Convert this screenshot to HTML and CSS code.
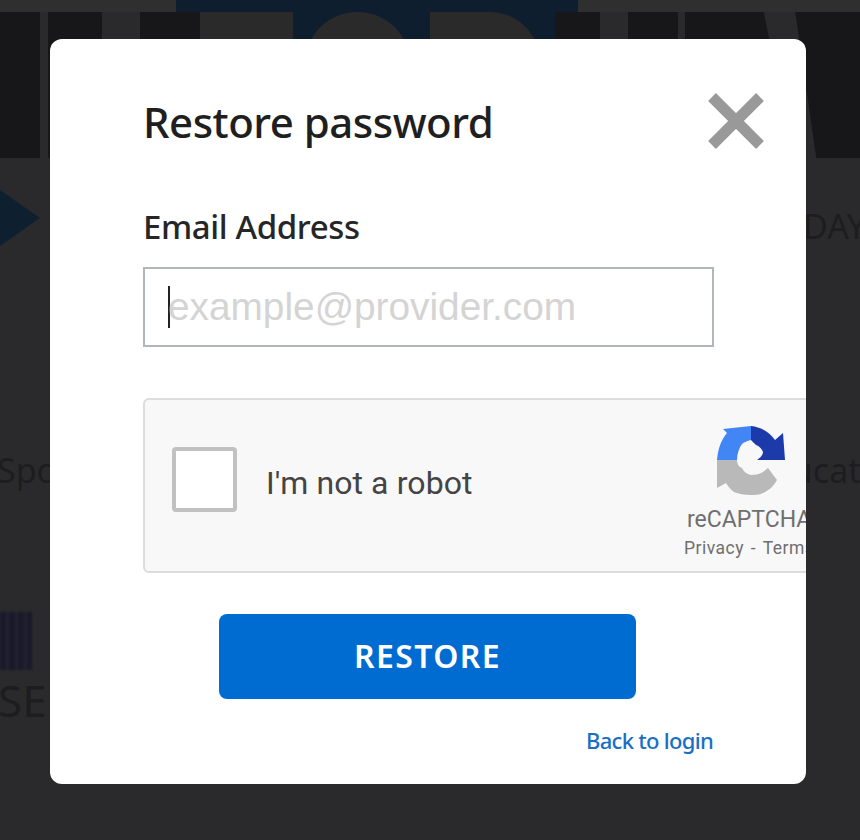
FILE: index.html
```html
<!DOCTYPE html>
<html>
<head>
	<title>Restore password</title>
	<link rel="stylesheet" href="styles.css">
</head>
<body>
	<div class="backdrop">
		<div class="back-strip"></div>
		<div class="back-bar"></div>
		<div class="back-letters">
			<span class="letter letter-a"></span>
			<span class="letter letter-b"></span>
			<span class="letter letter-c"></span>
			<span class="letter letter-d"></span>
			<span class="letter letter-e"></span>
			<span class="letter letter-f"></span>
			<span class="letter letter-g"></span>
			<span class="letter letter-h"></span>
			<span class="letter letter-i"></span>
		</div>
		<div class="back-arrow"></div>
		<div class="back-text back-day">DAY</div>
		<div class="back-text back-sport">Sport</div>
		<div class="back-text back-edu">Education</div>
		<div class="back-logo"></div>
		<div class="back-text back-ser">SER</div>
	</div>
	<div class="modal">
		<div class="modal-head">
			<h1 class="modal-title">Restore password</h1>
			<svg class="close-icon" viewBox="0 0 58 58" width="58" height="58">
				<path d="M5 5 L53 53 M53 5 L5 53" stroke="#999" stroke-width="11" fill="none"/>
			</svg>
		</div>
		<label class="field-label">Email Address</label>
		<div class="email-input">
			<span class="caret"></span>
			<span class="placeholder">example@provider.com</span>
		</div>
		<div class="captcha">
			<div class="captcha-box"></div>
			<div class="captcha-text">I'm not a robot</div>
			<div class="captcha-brand">
				<svg class="captcha-logo" viewBox="0 0 70 70" width="70" height="70">
					<path d="M1 34 C2 23 5 14 11 7 L7 3 L35 0 L35 14 C31 15 28 16 26 18 C23 22 21 28 21 34 Z" fill="#4285f4"/>
					<path d="M35 0 C45 1 53 6 59 14 L67 7 L69 34 L41 34 C44 32 47 29 47 26 C46 23 43 20 40 19 C38 17 36 15 35 14 Z" fill="#1c3aa9"/>
					<path d="M1 34 L21 34 C21 38 23 41 26 42 C28 46 31 48 35 49 C40 49 44 48 47 46 L52 42 L61 54 C57 61 52 65 47 67 C43 69 39 69 35 69 C28 69 23 68 18 66 C15 64 12 60 10 57 L1 62 Z" fill="#b9b9b9"/>
				</svg>
				<div class="captcha-name">reCAPTCHA</div>
				<div class="captcha-links">Privacy - Terms</div>
			</div>
		</div>
		<div class="button-row">
			<div class="restore-button">RESTORE</div>
		</div>
		<div class="back-row">
			<a class="back-link">Back to login</a>
		</div>
	</div>
</body>
</html>
```

FILE: styles.css
```css
html, body {
	margin: 0;
	height: 100%;
}
body {
	position: relative;
	height: 840px;
	overflow: hidden;
	background-color: #2a2a2c;
	font-family: "Noto Sans", "Open Sans", sans-serif;
}
.backdrop {
	position: absolute;
	top: 0;
	left: 0;
	width: 860px;
	height: 840px;
	overflow: hidden;
}
.back-strip {
	height: 12px;
	background-color: #302f30;
}
.back-bar {
	position: absolute;
	top: 0;
	left: 176px;
	width: 402px;
	height: 158px;
	background-color: #0e1e2e;
}
.back-letters {
	position: absolute;
	top: 12px;
	left: 0;
	width: 860px;
	height: 146px;
}
.letter {
	position: absolute;
	top: 0;
	height: 146px;
	background-color: #171719;
}
.letter-a { left: 0; width: 40px; }
.letter-b { left: 48px; width: 54px; }
.letter-c { left: 140px; width: 60px; }
.letter-d { left: 200px; width: 93px; background-color: #2b2a2b; }
.letter-e { left: 305px; width: 105px; background-color: #2b2a2b; border-radius: 52px 52px 0 0; }
.letter-f { left: 430px; width: 110px; background-color: #2b2a2b; border-radius: 0 50px 0 0; }
.letter-g { left: 555px; width: 45px; }
.letter-h { left: 628px; width: 50px; }
.letter-i { left: 685px; width: 175px; clip-path: polygon(0 0, 45% 0, 62% 100%, 75% 100%, 63% 0, 100% 0, 100% 100%, 0 100%); }
.back-arrow {
	position: absolute;
	top: 190px;
	left: 0;
	border-top: 28px solid transparent;
	border-bottom: 28px solid transparent;
	border-left: 40px solid #0e2030;
}
.back-text {
	position: absolute;
	color: #1d1d1f;
	font-size: 34px;
	white-space: nowrap;
}
.back-day { top: 203px; left: 803px; }
.back-sport { top: 447px; left: -3px; }
.back-edu { top: 447px; left: 752px; }
.back-logo {
	position: absolute;
	top: 612px;
	left: 0;
	width: 32px;
	height: 58px;
	background: repeating-linear-gradient(90deg, #181a2b 0, #181a2b 6px, #22222c 6px, #22222c 9px);
	filter: blur(1px);
}
.back-ser { top: 670px; left: -2px; font-size: 44px; }

.modal {
	position: absolute;
	top: 39px;
	left: 50px;
	width: 756px;
	height: 745px;
	box-sizing: border-box;
	padding: 48px 41px 0 93px;
	background-color: #fff;
	border-radius: 12px;
	overflow: hidden;
}
.modal-head {
	display: flex;
	justify-content: space-between;
	align-items: flex-start;
	height: 118px;
}
.modal-title {
	margin: 7px 0 0;
	font-size: 42px;
	line-height: 56px;
	font-weight: 500;
	color: #1f1f21;
	letter-spacing: -0.5px;
}
.close-icon {
	margin: 5px 0 0;
}
.field-label {
	display: block;
	font-size: 33px;
	line-height: 44px;
	font-weight: 500;
	color: #262628;
	letter-spacing: -0.4px;
}
.email-input {
	display: flex;
	align-items: center;
	box-sizing: border-box;
	width: 571px;
	height: 80px;
	margin-top: 18px;
	padding-left: 23px;
	border: 2px solid #b0b6ba;
}
.caret {
	width: 2px;
	height: 42px;
	margin-right: -2px;
	background-color: #222;
}
.placeholder {
	font-family: "Liberation Sans", sans-serif;
	font-size: 38.8px;
	color: #d4d4d4;
}
.captcha {
	display: flex;
	align-items: center;
	box-sizing: border-box;
	position: relative;
	width: 700px;
	height: 175px;
	margin-top: 51px;
	padding-left: 27px;
	padding-bottom: 12px;
	background-color: #f8f8f8;
	border: 2px solid #dcdcdc;
	border-radius: 6px;
}
.captcha-box {
	box-sizing: border-box;
	width: 65px;
	height: 65px;
	background-color: #fff;
	border: 4px solid #c1c1c1;
	border-radius: 4px;
}
.captcha-text {
	margin: 6px 0 0 29px;
	font-family: Roboto, sans-serif;
	font-size: 32px;
	letter-spacing: 0.1px;
	color: #444;
}
.captcha-brand {
	position: absolute;
	top: 26px;
	left: 538px;
	width: 140px;
	text-align: left;
	font-family: Roboto, "Liberation Sans", sans-serif;
}
.captcha-logo {
	display: block;
	margin-left: 33px;
}
.captcha-name {
	margin-top: 10px;
	margin-left: 4px;
	font-size: 23px;
	line-height: 28px;
	color: #6f6f6f;
}
.captcha-links {
	margin-top: 3px;
	margin-left: 1px;
	font-size: 17.5px;
	line-height: 22px;
	letter-spacing: 0.5px;
	word-spacing: 2px;
	color: #6f6f6f;
	white-space: nowrap;
}
.button-row {
	margin-top: 41px;
	padding-left: 76px;
}
.restore-button {
	width: 417px;
	height: 85px;
	background-color: #006bd0;
	border-radius: 8px;
	color: #fff;
	font-size: 32px;
	font-weight: 600;
	letter-spacing: 1.4px;
	line-height: 83px;
	text-align: center;
}
.back-row {
	width: 570px;
	margin-top: 23px;
	text-align: right;
}
.back-link {
	font-size: 22px;
	line-height: 36px;
	font-weight: 500;
	color: #1a6fc4;
	letter-spacing: -0.7px;
}
```
